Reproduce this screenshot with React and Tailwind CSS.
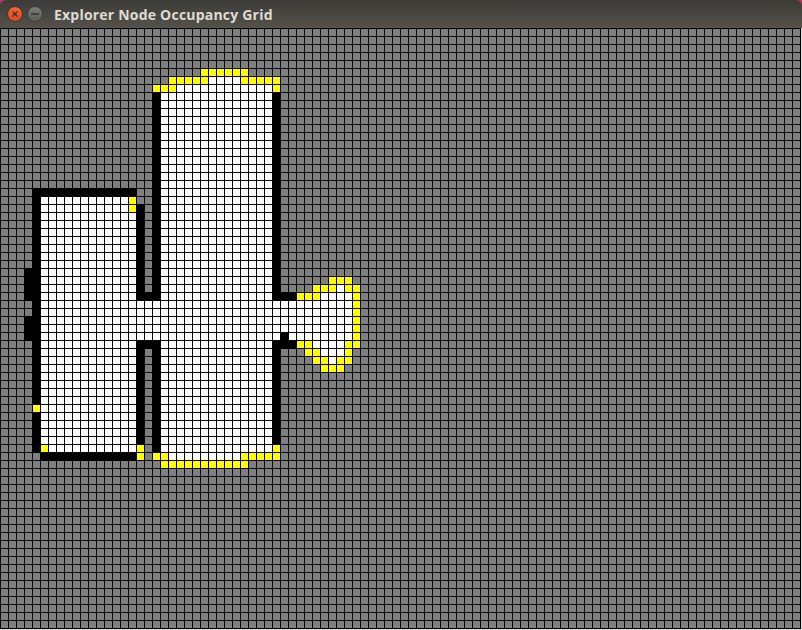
const COLS = 100;
const ROWS = 75;

function mapRows() {
  const m = Array.from({ length: ROWS }, () => Array(COLS).fill("g"));
  const put = (r1, r2, c1, c2, v) => {
    for (let r = r1; r <= r2; r++) for (let c = c1; c <= c2; c++) m[r][c] = v;
  };
  put(5, 5, 25, 30, "y");
  put(6, 6, 21, 34, "y");
  put(6, 6, 26, 29, "w");
  put(7, 7, 19, 34, "w");
  put(7, 7, 19, 21, "y");
  put(7, 7, 34, 34, "y");
  put(8, 52, 20, 33, "w");
  put(8, 52, 19, 19, "k");
  put(8, 51, 34, 34, "k");
  put(20, 20, 4, 16, "k");
  put(21, 52, 5, 16, "w");
  put(21, 52, 4, 4, "k");
  put(21, 22, 16, 16, "y");
  put(22, 32, 17, 17, "k");
  put(33, 33, 17, 19, "k");
  put(30, 33, 3, 3, "k");
  put(36, 38, 3, 3, "k");
  put(39, 39, 17, 19, "k");
  put(40, 51, 17, 17, "k");
  put(47, 47, 4, 4, "y");
  put(52, 52, 5, 5, "y");
  put(52, 53, 17, 17, "y");
  put(53, 53, 5, 16, "k");
  put(34, 38, 5, 43, "w");
  put(34, 38, 44, 44, "y");
  put(38, 38, 35, 35, "k");
  put(31, 31, 41, 43, "y");
  put(32, 32, 39, 41, "y");
  put(32, 32, 42, 42, "w");
  put(32, 32, 43, 44, "y");
  put(33, 33, 34, 36, "k");
  put(33, 33, 37, 39, "y");
  put(33, 33, 40, 43, "w");
  put(33, 33, 44, 44, "y");
  put(39, 39, 34, 36, "k");
  put(39, 39, 37, 38, "y");
  put(39, 39, 39, 42, "w");
  put(39, 39, 43, 44, "y");
  put(40, 40, 38, 39, "y");
  put(40, 40, 40, 42, "w");
  put(40, 40, 43, 43, "y");
  put(41, 41, 39, 40, "y");
  put(41, 41, 41, 41, "w");
  put(41, 41, 42, 43, "y");
  put(42, 42, 40, 42, "y");
  put(52, 52, 34, 34, "y");
  put(53, 53, 19, 20, "y");
  put(53, 53, 21, 29, "w");
  put(53, 53, 30, 34, "y");
  put(54, 54, 20, 30, "y");
  return m;
}

const CELL = {
  g: "bg-[#7f7f7f]",
  k: "bg-black",
  w: "bg-white",
  y: "bg-[#ffff00]",
};

function TitleBar() {
  return (
    <div className="h-7 flex items-center rounded-t-[6px] bg-gradient-to-b from-[#3c3b37] to-[#55524c]">
      <div className="ml-[7px] w-4 h-4 rounded-full flex items-center justify-center bg-gradient-to-b from-[#f0643a] to-[#dd4b1c] border border-[#4a3228]">
        <svg width="8" height="8" viewBox="0 0 8 8">
          <path d="M1.5 1.5 L6.5 6.5 M6.5 1.5 L1.5 6.5" stroke="#4a2a1c" strokeWidth="1.3" />
        </svg>
      </div>
      <div className="ml-1 w-4 h-4 rounded-full flex items-center justify-center bg-gradient-to-b from-[#7c7a75] to-[#5f5d58] border border-[#3c3b37]">
        <svg width="10" height="8" viewBox="0 0 10 8">
          <path d="M1 4 H9" stroke="#35342f" strokeWidth="1.5" />
        </svg>
      </div>
      <span className="ml-[11px] font-['Open_Sans',sans-serif] font-bold text-[14px] tracking-[0.21px] text-[#dfdbd2] whitespace-nowrap">
        Explorer Node Occupancy Grid
      </span>
    </div>
  );
}

export default function App() {
  const m = mapRows();
  return (
    <div className="w-[802px] h-[630px] overflow-hidden bg-[#b8385c]">
      <TitleBar />
      <div className="bg-[#d9d9d9] h-[602px]">
        <div className="grid grid-cols-[repeat(100,7px)] auto-rows-[7px] gap-px w-[801px] h-[601px] pl-px pt-px bg-black content-start">
          {m.flatMap((row, r) =>
            row.map((v, c) => <div key={r * COLS + c} className={CELL[v]} />)
          )}
        </div>
      </div>
    </div>
  );
}
